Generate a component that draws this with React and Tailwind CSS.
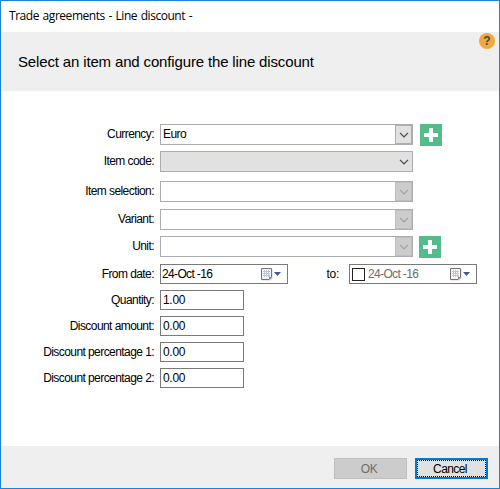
import React from 'react';

const Label = ({ children }) => (
  <div className="w-[154px] shrink-0 whitespace-nowrap text-right leading-[20px] tracking-[-0.57px]">{children}</div>
);

const Chevron = ({ color }) => (
  <svg width="10" height="6" viewBox="0 0 10 6" fill="none" stroke={color} strokeWidth="1.2">
    <path d="M1 .8 5 4.8 9 .8" />
  </svg>
);

function Combo({ value, kind }) {
  const filled = kind === 'list';
  const button = {
    list: 'bg-[#e1e1e1]',
    active: 'border border-[#adadad] bg-[#e1e1e1]',
    disabled: 'border border-[#bfbfbf] bg-[#cccccc]',
  }[kind];
  return (
    <div className={`ml-[6px] flex h-[21px] w-[253px] shrink-0 border border-[#abadb3] ${filled ? 'bg-[#e1e1e1]' : 'bg-white'}`}>
      <div className="flex-1 pl-[2px] leading-[19px] tracking-[-0.57px]">{value}</div>
      <div className={`flex w-[17px] items-center justify-center ${button}`}>
        <Chevron color={kind === 'disabled' ? '#a0a0a0' : '#444444'} />
      </div>
    </div>
  );
}

const Plus = ({ margin }) => (
  <svg className={`shrink-0 ${margin}`} width="22" height="22" viewBox="0 0 22 22">
    <path d="M0 0h22v22H0z" fill="#54bc8b" />
    <path d="M9 4h4v5h5v4h-5v5H9v-5H4V9h5z" fill="#fff" />
  </svg>
);

const DateIcon = () => (
  <svg className="mr-[5px] shrink-0" width="22" height="14" viewBox="0 0 22 14">
    <path d="M2 2h10.5v9.5l-2 2H2z" fill="#d8d4d2" />
    <path d="M1.5 1.5h10v8.5l-2.5 2.5H1.5z" fill="#f4f5f9" stroke="#7a7072" />
    <path d="M3 3h7v7H3z" fill="#bfc6d4" />
    <path d="M3 3h1v1H3zM5 3h1v1H5zM7 3h1v1H7zM9 3h1v1H9zM3 5h1v1H3zM5 5h1v1H5zM7 5h1v1H7zM9 5h1v1H9zM3 7h1v1H3zM5 7h1v1H5zM7 7h1v1H7zM9 7h1v1H9zM3 9h1v1H3zM5 9h1v1H5zM7 9h1v1H7z" fill="#fff" />
    <path d="M9 12.5V10h2.5z" fill="#8d8280" />
    <path d="M14 5h7l-3.5 4z" fill="#405a91" />
  </svg>
);

const TextField = ({ label, value }) => (
  <div className="mt-[6px] flex h-5 items-center">
    <Label>{label}</Label>
    <div className="ml-[6px] h-5 w-[84px] border border-[#7a7a7a] pl-[2px] leading-[18px] tracking-[-0.3px]">{value}</div>
  </div>
);

export default function App() {
  return (
    <div className="flex h-[489px] w-[500px] flex-col overflow-hidden border border-[#1883d7] bg-white font-['Liberation_Sans',Arial,sans-serif] text-[12px] text-black">
      <div className="h-[31px] shrink-0 whitespace-nowrap pl-[8px] font-['Open_Sans','Noto_Sans',sans-serif] text-[12px] leading-[30px] tracking-[-0.46px] [word-spacing:1px]">
        Trade agreements - Line discount -
      </div>
      <header className="flex h-[59px] shrink-0 justify-between bg-[#efefef] pl-[17px] pr-[4px]">
        <h1 className="whitespace-nowrap text-[15px] leading-[60px] tracking-[-0.15px]">Select an item and configure the line discount</h1>
        <div className="mt-px flex h-4 w-4 items-center justify-center rounded-full bg-[#f0a93c] text-[12px] font-bold leading-none text-[#46484a]">?</div>
      </header>

      <main className="flex-1 pt-[33px]">
        <div className="-ml-px flex h-[21px] items-start">
          <Label>Currency:</Label>
          <Combo kind="active" value="Euro" />
          <Plus margin="ml-[7px]" />
        </div>
        <div className="-ml-px mt-[6px] flex h-[21px] items-start">
          <Label>Item code:</Label>
          <Combo kind="list" />
        </div>
        <div className="-ml-px mt-[9px] flex h-[21px] items-start">
          <Label>Item selection:</Label>
          <Combo kind="disabled" />
        </div>
        <div className="-ml-px mt-[7px] flex h-[21px] items-start">
          <Label>Variant:</Label>
          <Combo kind="disabled" />
        </div>
        <div className="-ml-px mt-[6px] flex h-[21px] items-start">
          <Label>Unit:</Label>
          <Combo kind="disabled" />
          <Plus margin="ml-[6px]" />
        </div>
        <div className="-ml-px mt-[7px] flex h-5 items-center">
          <Label>From date:</Label>
          <div className="ml-[6px] flex h-5 w-[128px] shrink-0 items-center border border-[#7a7a7a]">
            <span className="flex-1 whitespace-nowrap pl-px tracking-[-0.65px]">24-Oct -16</span>
            <DateIcon />
          </div>
          <span className="w-[51px] shrink-0 text-right tracking-[-0.3px]">to:</span>
          <div className="ml-[10px] flex h-5 w-[128px] shrink-0 items-center border border-[#7a7a7a]">
            <span className="ml-[2px] h-[13px] w-[13px] shrink-0 border border-[#222222] bg-white" />
            <span className="flex-1 whitespace-nowrap pl-[3px] tracking-[-0.65px] text-[#6d6d6d]">24-Oct -16</span>
            <DateIcon />
          </div>
        </div>
        <div className="-ml-px">
          <TextField label="Quantity:" value="1.00" />
          <TextField label="Discount amount:" value="0.00" />
          <TextField label="Discount percentage 1:" value="0.00" />
          <TextField label="Discount percentage 2:" value="0.00" />
        </div>
      </main>

      <footer className="flex h-[42px] shrink-0 justify-end gap-[8px] bg-[#efefef] pr-[11px] pt-[12px]">
        <button className="flex h-[21px] w-[73px] items-center justify-center border border-[#bfbfbf] bg-[#cccccc] pr-[3px] text-[12px] tracking-[-0.3px] text-[#6d6d6d]">OK</button>
        <button className="h-[21px] w-[73px] border-2 border-[#0078d7] bg-[#e1e1e1]">
          <span className="flex h-full items-center justify-center border border-dotted border-black pr-[3px] tracking-[-0.6px]">Cancel</span>
        </button>
      </footer>
    </div>
  );
}
